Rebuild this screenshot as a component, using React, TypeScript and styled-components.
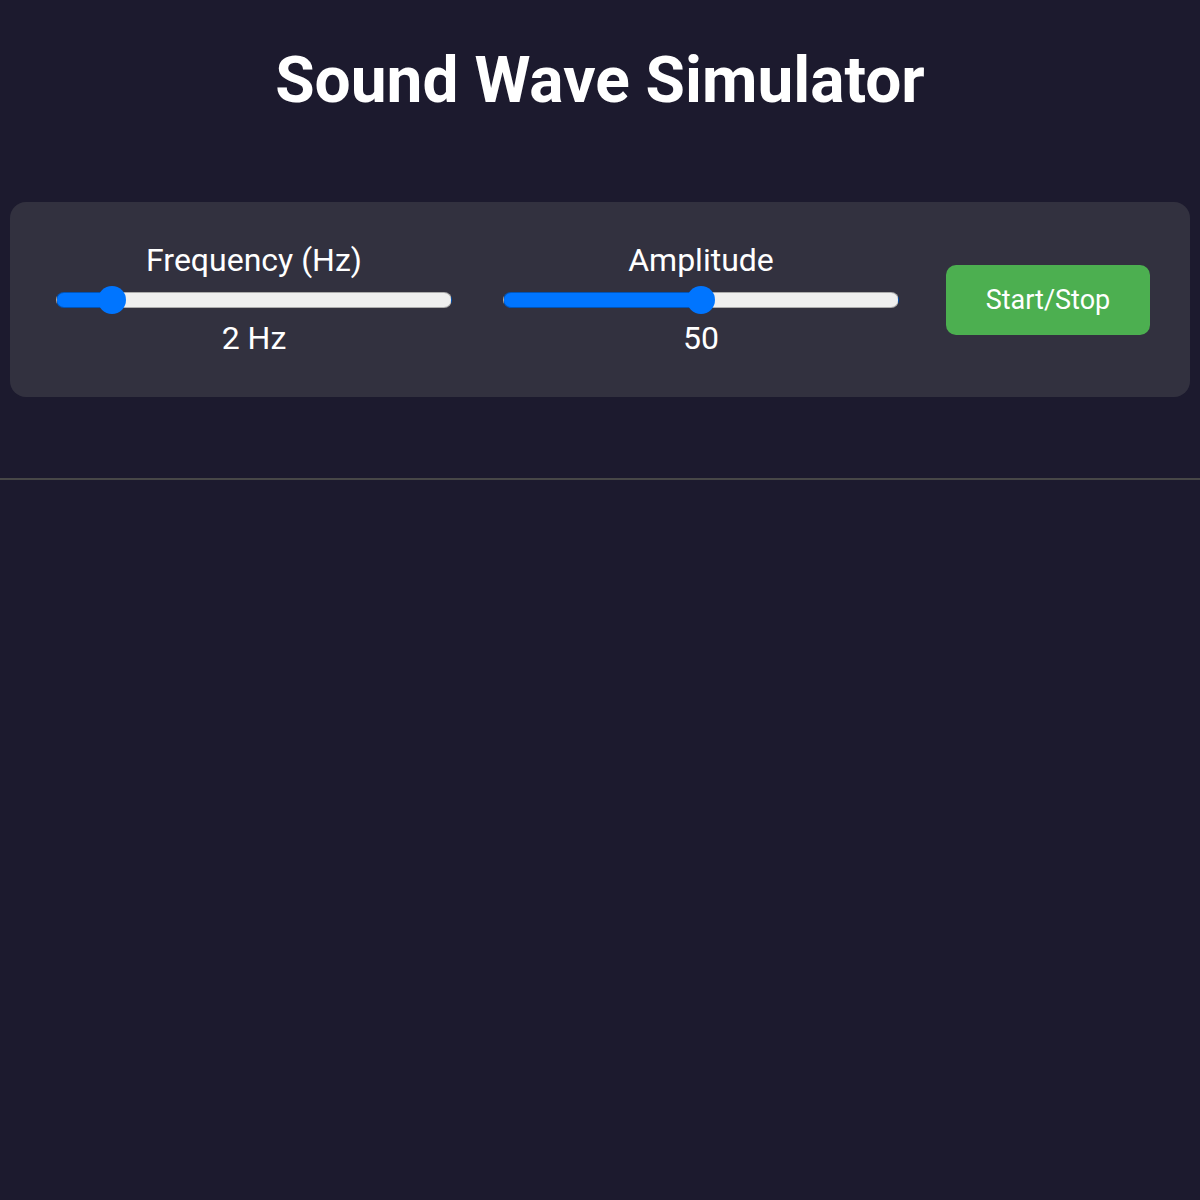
import React, { useEffect, useRef, useState } from 'react';
import styled, { createGlobalStyle } from 'styled-components';

const Global = createGlobalStyle`
  html, body {
    margin: 0;
    padding: 0;
    background: #1c1a2e;
  }
  body {
    font-family: Roboto, "Noto Sans", "Liberation Sans", sans-serif;
    color: #ffffff;
  }
`;

const Page = styled.div`
  min-height: 1200px;
  background: #1c1a2e;
  display: flex;
  flex-direction: column;
`;

const Title = styled.h1`
  margin: 43px 0 84px;
  font-size: 64px;
  line-height: 75px;
  font-weight: 700;
  text-align: center;
  color: #ffffff;
`;

const Panel = styled.section`
  margin: 0 10px;
  padding: 40px 40px 40px 42px;
  background: #32313f;
  border-radius: 16px;
  display: flex;
  align-items: center;
  gap: 43px;
`;

const Group = styled.div`
  width: 404px;
  display: flex;
  flex-direction: column;
  align-items: center;
`;

const Label = styled.label`
  font-size: 32px;
  line-height: 37.5px;
  color: #ffffff;
`;

const Value = styled.span`
  font-size: 32px;
  line-height: 37.5px;
  color: #ffffff;
`;

const Range = styled.input.attrs({ type: 'range' })`
  -webkit-appearance: none;
  appearance: none;
  width: 396px;
  height: 16px;
  margin: 12px 4px;
  padding: 0;
  background: transparent;
  cursor: pointer;

  &::-webkit-slider-runnable-track {
    height: 16px;
    box-sizing: border-box;
    border-radius: 8px;
    border: 1px solid rgba(0, 0, 0, 0.28);
    background: linear-gradient(
      to right,
      #0075ff 0,
      #0075ff var(--fill),
      #efefef var(--fill),
      #efefef 100%
    );
  }

  &::-webkit-slider-thumb {
    -webkit-appearance: none;
    appearance: none;
    width: 28px;
    height: 28px;
    margin-top: -7px;
    border: none;
    border-radius: 50%;
    background: #0075ff;
  }

  &:focus {
    outline: none;
  }
`;

const ToggleButton = styled.button`
  width: 204px;
  height: 70px;
  border: none;
  border-radius: 10px;
  background: #4caf50;
  color: #ffffff;
  font-family: Roboto, "Noto Sans", sans-serif;
  font-size: 27px;
  cursor: pointer;
`;

const Wave = styled.svg`
  display: block;
  width: 100%;
  height: 84px;
  margin-top: 40px;
  overflow: visible;
`;

type SliderProps = {
  label: string;
  min: number;
  max: number;
  value: number;
  unit?: string;
  onChange: (v: number) => void;
};

function Slider({ label, min, max, value, unit, onChange }: SliderProps) {
  const ratio = (value - min) / (max - min);
  const fill = `calc(14px + ${ratio} * 368px)`;
  return (
    <Group>
      <Label>{label}</Label>
      <Range
        min={min}
        max={max}
        value={value}
        style={{ ['--fill' as any]: fill }}
        onChange={(e: React.ChangeEvent<HTMLInputElement>) => onChange(Number(e.target.value))}
      />
      <Value>
        {value}
        {unit ? ` ${unit}` : ''}
      </Value>
    </Group>
  );
}

export default function App() {
  const [frequency, setFrequency] = useState(2);
  const [amplitude, setAmplitude] = useState(50);
  const [running, setRunning] = useState(false);
  const [phase, setPhase] = useState(0);
  const raf = useRef<number | null>(null);

  useEffect(() => {
    if (!running) return;
    let last = performance.now();
    const tick = (t: number) => {
      const dt = (t - last) / 1000;
      last = t;
      setPhase((p) => p + dt * frequency * Math.PI * 2);
      raf.current = requestAnimationFrame(tick);
    };
    raf.current = requestAnimationFrame(tick);
    return () => {
      if (raf.current) cancelAnimationFrame(raf.current);
    };
  }, [running, frequency]);

  const width = 1200;
  const mid = 42;
  let d = `M0 ${mid} L${width} ${mid}`;
  if (running) {
    const pts: string[] = [];
    for (let x = 0; x <= width; x += 4) {
      const y = mid + (amplitude / 100) * 40 * Math.sin((x / width) * frequency * Math.PI * 2 - phase);
      pts.push(`${x} ${y.toFixed(2)}`);
    }
    d = `M${pts.join(' L')}`;
  }

  return (
    <Page>
      <Global />
      <Title>Sound Wave Simulator</Title>
      <Panel>
        <Slider label="Frequency (Hz)" min={1} max={10} value={frequency} unit="Hz" onChange={setFrequency} />
        <Slider label="Amplitude" min={0} max={100} value={amplitude} onChange={setAmplitude} />
        <ToggleButton onClick={() => setRunning((r) => !r)}>Start/Stop</ToggleButton>
      </Panel>
      <Wave viewBox={`0 0 ${width} 84`} preserveAspectRatio="none">
        <path d={d} fill="none" stroke="#474747" strokeWidth={2} />
      </Wave>
    </Page>
  );
}
